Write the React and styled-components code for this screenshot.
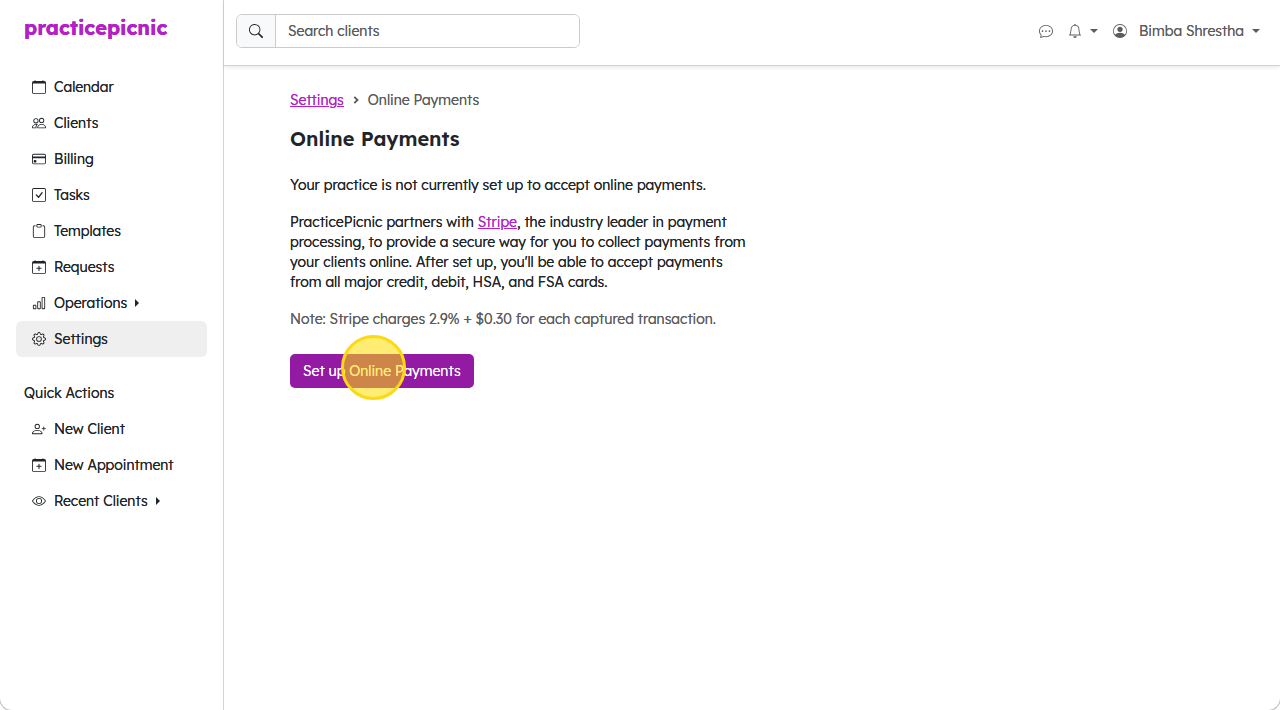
import React from 'react';
import styled, { createGlobalStyle } from 'styled-components';
import {
  BsBarChart,
  BsBell,
  BsChatDots,
  BsClipboard,
  BsCreditCard,
  BsEye,
  BsGear,
  BsPeople,
  BsPersonCircle,
  BsPersonPlus,
  BsSearch,
} from 'react-icons/bs';

const colors = {
  brand: '#b321c6',
  button: '#931ba3',
  text: '#212529',
  muted: '#5c5c5c',
  border: '#c9cccf',
  divider: '#d3d3d3',
  active: '#efefef',
  addon: '#f8f9fa',
};

const GlobalStyle = createGlobalStyle`
  * {
    box-sizing: border-box;
  }

  body {
    margin: 0;
    background: #fff;
    color: ${colors.text};
    font-family: Lexend, Inter, sans-serif;
    font-size: 14px;
    font-weight: 300;
    line-height: 20px;
  }

  /* firms up the edges of the light weight */
  a, p, h2, button, input, nav {
    text-shadow: 0 0 0 currentColor;
  }

  button, input {
    font: inherit;
    color: inherit;
  }
`;

const Shell = styled.div`
  min-height: 100vh;
  display: flex;
  background: #fff;
  border-radius: 0 0 12px 12px;
  box-shadow: 0 0 0 1px #bbb;
`;

const Sidebar = styled.aside`
  width: 224px;
  flex-shrink: 0;
  padding: 12px 16px;
  border-right: 1px solid ${colors.divider};
`;

const Brand = styled.a`
  display: block;
  margin: 0 8px 25px;
  color: ${colors.brand};
  font-size: 20px;
  font-weight: 700;
  line-height: 32px;
  text-decoration: none;
`;

const NavList = styled.ul`
  list-style: none;
  margin: 0;
  padding: 0;
`;

const NavLink = styled.a`
  display: flex;
  align-items: center;
  gap: 8px;
  padding: 8px 16px;
  border-radius: 6px;
  background: ${props => props.$active ? colors.active : 'transparent'};
  color: ${colors.text};
  text-decoration: none;

  svg {
    width: 14px;
    height: 14px;
    flex-shrink: 0;
  }
`;

const NavCaret = styled.span`
  border-left: 4px solid currentColor;
  border-top: 4px solid transparent;
  border-bottom: 4px solid transparent;
`;

const NavHeading = styled.h2`
  margin: 26px 8px 8px;
  font-size: 14px;
  font-weight: 300;
  line-height: 20px;
`;

const Main = styled.div`
  flex: 1;
  min-width: 0;
`;

const TopBar = styled.header`
  display: flex;
  align-items: flex-start;
  justify-content: space-between;
  padding: 14px 20px 17px 12px;
  border-bottom: 1px solid ${colors.divider};
  box-shadow: 0 2px 4px rgba(0, 0, 0, 0.08);
`;

const SearchGroup = styled.form`
  display: flex;
  width: 344px;
  height: 34px;
  border: 1px solid ${colors.border};
  border-radius: 6px;
  overflow: hidden;
`;

const SearchButton = styled.button`
  display: flex;
  align-items: center;
  padding: 0 12px;
  background: ${colors.addon};
  border: none;
  border-right: 1px solid ${colors.border};

  svg {
    width: 14px;
    height: 14px;
  }
`;

const SearchInput = styled.input`
  flex: 1;
  min-width: 0;
  padding: 0 12px;
  border: none;
  outline: none;
  background: #fff;

  &::placeholder {
    color: ${colors.muted};
    opacity: 1;
  }
`;

const Tools = styled.div`
  display: flex;
  gap: 15px;
  padding-top: 7px;
`;

const ToolButton = styled.button`
  display: flex;
  align-items: center;
  gap: ${props => props.$wide ? '12px' : '8px'};
  padding: 0;
  border: none;
  background: none;
  color: ${colors.muted};

  svg {
    width: 14px;
    height: 14px;
  }
`;

const DropCaret = styled.span`
  width: 8px;
  border-top: 4px solid currentColor;
  border-left: 4px solid transparent;
  border-right: 4px solid transparent;
  margin-left: ${props => props.$near ? '-4px' : '0'};
`;

const Content = styled.main`
  max-width: 544px;
  padding: 24px 16px 24px 66px;

  p {
    margin: 0 0 17px;
  }

  a {
    color: ${colors.brand};
  }
`;

const Breadcrumb = styled.nav`
  display: flex;
  align-items: center;
  gap: 8px;
  color: ${colors.muted};

  svg {
    width: 8px;
    height: 8px;
  }
`;

const Title = styled.h1`
  margin: 17px 0 24px;
  font-size: 20px;
  font-weight: 600;
  line-height: 24px;
`;

const Note = styled.p`
  color: ${colors.muted};
`;

const SetupRow = styled.div`
  position: relative;
  display: inline-flex;
  margin-top: 8px;
`;

const PrimaryButton = styled.button`
  padding: 7px 13px;
  border: none;
  border-radius: 5px;
  background: ${colors.button};
  color: #fff;
`;

const ClickMarker = styled.span`
  position: absolute;
  top: -19px;
  left: 51px;
  width: 65px;
  height: 65px;
  border: 3px solid #fbd915;
  border-radius: 50%;
  background: rgba(255, 220, 0, 0.55);
  pointer-events: none;
`;

// Calendar with a solid header band, optionally with a plus inside
function CalendarIcon({ plus }) {
  return (
    <svg viewBox="0 0 16 16" fill="currentColor" aria-hidden="true">
      <path d="M3.5 0a.5.5 0 0 1 .5.5V1h8V.5a.5.5 0 0 1 1 0V1h1a2 2 0 0 1 2 2v11a2 2 0 0 1-2 2H2a2 2 0 0 1-2-2V3a2 2 0 0 1 2-2h1V.5a.5.5 0 0 1 .5-.5M1 4v10a1 1 0 0 0 1 1h12a1 1 0 0 0 1-1V4z" />
      {plus && <path d="M8 6.5a.6.6 0 0 1 .6.6V8.900H10.400a.6.6 0 0 1 0 1.200H8.600v1.800a.6.6 0 0 1-1.200 0V10.100H5.600a.6.6 0 0 1 0-1.200H7.400V7.100A.6.6 0 0 1 8 6.500" />}
    </svg>
  );
}

// Checkbox outline with the tick kept inside
function TaskIcon() {
  return (
    <svg viewBox="0 0 16 16" fill="currentColor" aria-hidden="true">
      <path d="M14 1a1 1 0 0 1 1 1v12a1 1 0 0 1-1 1H2a1 1 0 0 1-1-1V2a1 1 0 0 1 1-1zM2 0a2 2 0 0 0-2 2v12a2 2 0 0 0 2 2h12a2 2 0 0 0 2-2V2a2 2 0 0 0-2-2z" />
      <path d="M10.97 4.97a.75.75 0 0 1 1.071 1.05l-3.992 4.99a.75.75 0 0 1-1.08.02L4.324 8.384a.75.75 0 1 1 1.06-1.06l2.094 2.093 3.473-4.425z" />
    </svg>
  );
}

function ChevronIcon() {
  return (
    <svg viewBox="0 0 8 8" fill="none" stroke="currentColor" strokeWidth="1.9" aria-hidden="true">
      <path d="M2.3 0.8L5.5 4L2.3 7.2" />
    </svg>
  );
}

const menuItems = [
  { label: 'Calendar', icon: <CalendarIcon /> },
  { label: 'Clients', icon: <BsPeople /> },
  { label: 'Billing', icon: <BsCreditCard /> },
  { label: 'Tasks', icon: <TaskIcon /> },
  { label: 'Templates', icon: <BsClipboard /> },
  { label: 'Requests', icon: <CalendarIcon plus /> },
  { label: 'Operations', icon: <BsBarChart />, caret: true },
  { label: 'Settings', icon: <BsGear />, active: true },
];

const quickActions = [
  { label: 'New Client', icon: <BsPersonPlus /> },
  { label: 'New Appointment', icon: <CalendarIcon plus /> },
  { label: 'Recent Clients', icon: <BsEye />, caret: true },
];

function Menu({ items }) {
  return (
    <NavList>
      {items.map((item) => (
        <li key={item.label}>
          <NavLink href="#" $active={item.active}>
            {item.icon}
            {item.label}
            {item.caret && <NavCaret />}
          </NavLink>
        </li>
      ))}
    </NavList>
  );
}

function App() {
  return (
    <>
      <GlobalStyle />
      <Shell>
        <Sidebar>
          <Brand href="#">practicepicnic</Brand>
          <Menu items={menuItems} />
          <NavHeading>Quick Actions</NavHeading>
          <Menu items={quickActions} />
        </Sidebar>

        <Main>
          <TopBar>
            <SearchGroup>
              <SearchButton type="button" aria-label="Search">
                <BsSearch />
              </SearchButton>
              <SearchInput type="text" placeholder="Search clients" aria-label="Search clients" />
            </SearchGroup>
            <Tools>
              <ToolButton aria-label="Messages">
                <BsChatDots />
              </ToolButton>
              <ToolButton aria-label="Notifications">
                <BsBell />
                <DropCaret />
              </ToolButton>
              <ToolButton $wide>
                <BsPersonCircle />
                Bimba Shrestha
                <DropCaret $near />
              </ToolButton>
            </Tools>
          </TopBar>

          <Content>
            <Breadcrumb aria-label="Breadcrumb">
              <a href="#">Settings</a>
              <ChevronIcon />
              <span>Online Payments</span>
            </Breadcrumb>
            <Title>Online Payments</Title>
            <p>Your practice is not currently set up to accept online payments.</p>
            <p>
              PracticePicnic partners with <a href="#">Stripe</a>, the industry leader in payment
              processing, to provide a secure way for you to collect payments from your clients
              online. After set up, you'll be able to accept payments from all major credit,
              debit, HSA, and FSA cards.
            </p>
            <Note>Note: Stripe charges 2.9% + $0.30 for each captured transaction.</Note>
            <SetupRow>
              <PrimaryButton>Set up Online Payments</PrimaryButton>
              <ClickMarker />
            </SetupRow>
          </Content>
        </Main>
      </Shell>
    </>
  );
}

export default App;
